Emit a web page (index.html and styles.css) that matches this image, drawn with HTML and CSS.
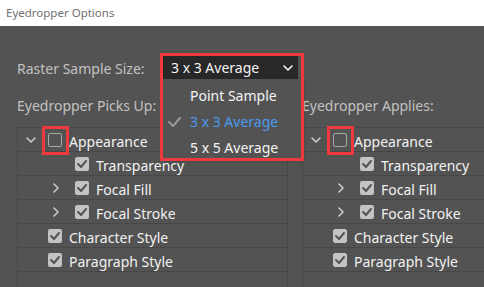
FILE: index.html
```html
<!DOCTYPE html>
<html lang="en">
  <head>
    <meta charset="UTF-8" />
    <meta name="viewport" content="width=device-width, initial-scale=1.0" />
    <title>Eyedropper Options</title>
    <link rel="stylesheet" href="styles.css">
  </head>

  <body>
    <header class="titlebar">Eyedropper Options</header>

    <main class="dialog">
      <section class="raster">
        <span class="label raster-label">Raster Sample Size:</span>
        <div class="picker">
          <div class="select">
            <span>3 x 3 Average</span>
            <svg class="select-arrow" width="10" height="6" viewBox="0 0 10 6"><path d="M1 1l4 4 4-4" /></svg>
          </div>
          <ul class="menu">
            <li class="menu-item">Point Sample</li>
            <li class="menu-item selected">
              <svg class="menu-check" width="13" height="10" viewBox="0 0 13 10"><path d="M1 5l4 4 7-8" /></svg>
              3 x 3 Average
            </li>
            <li class="menu-item">5 x 5 Average</li>
          </ul>
        </div>
      </section>

      <section class="columns">
        <article class="column">
          <h2 class="label">Eyedropper Picks Up:</h2>
          <div class="tree">
            <div class="row">
              <span class="twisty"><svg width="10" height="6" viewBox="0 0 10 6"><path d="M1 1l4 4 4-4" /></svg></span>
              <span class="box empty marked"></span>
              <span class="name">Appearance</span>
            </div>
            <div class="row sub">
              <span class="twisty"></span>
              <span class="box"><svg width="10" height="8" viewBox="0 0 10 8"><path d="M1 4l3 3 5-6" /></svg></span>
              <span class="name">Transparency</span>
            </div>
            <div class="row sub">
              <span class="twisty"><svg width="6" height="10" viewBox="0 0 6 10"><path d="M1 1l4 4-4 4" /></svg></span>
              <span class="box"><svg width="10" height="8" viewBox="0 0 10 8"><path d="M1 4l3 3 5-6" /></svg></span>
              <span class="name">Focal Fill</span>
            </div>
            <div class="row sub">
              <span class="twisty"><svg width="6" height="10" viewBox="0 0 6 10"><path d="M1 1l4 4-4 4" /></svg></span>
              <span class="box"><svg width="10" height="8" viewBox="0 0 10 8"><path d="M1 4l3 3 5-6" /></svg></span>
              <span class="name">Focal Stroke</span>
            </div>
            <div class="row">
              <span class="twisty"></span>
              <span class="box"><svg width="10" height="8" viewBox="0 0 10 8"><path d="M1 4l3 3 5-6" /></svg></span>
              <span class="name">Character Style</span>
            </div>
            <div class="row">
              <span class="twisty"></span>
              <span class="box"><svg width="10" height="8" viewBox="0 0 10 8"><path d="M1 4l3 3 5-6" /></svg></span>
              <span class="name">Paragraph Style</span>
            </div>
            <div class="row"></div>
          </div>
        </article>

        <article class="column">
          <h2 class="label">Eyedropper Applies:</h2>
          <div class="tree">
            <div class="row">
              <span class="twisty"><svg width="10" height="6" viewBox="0 0 10 6"><path d="M1 1l4 4 4-4" /></svg></span>
              <span class="box empty marked"></span>
              <span class="name">Appearance</span>
            </div>
            <div class="row sub">
              <span class="twisty"></span>
              <span class="box"><svg width="10" height="8" viewBox="0 0 10 8"><path d="M1 4l3 3 5-6" /></svg></span>
              <span class="name">Transparency</span>
            </div>
            <div class="row sub">
              <span class="twisty"><svg width="6" height="10" viewBox="0 0 6 10"><path d="M1 1l4 4-4 4" /></svg></span>
              <span class="box"><svg width="10" height="8" viewBox="0 0 10 8"><path d="M1 4l3 3 5-6" /></svg></span>
              <span class="name">Focal Fill</span>
            </div>
            <div class="row sub">
              <span class="twisty"><svg width="6" height="10" viewBox="0 0 6 10"><path d="M1 1l4 4-4 4" /></svg></span>
              <span class="box"><svg width="10" height="8" viewBox="0 0 10 8"><path d="M1 4l3 3 5-6" /></svg></span>
              <span class="name">Focal Stroke</span>
            </div>
            <div class="row">
              <span class="twisty"></span>
              <span class="box"><svg width="10" height="8" viewBox="0 0 10 8"><path d="M1 4l3 3 5-6" /></svg></span>
              <span class="name">Character Style</span>
            </div>
            <div class="row">
              <span class="twisty"></span>
              <span class="box"><svg width="10" height="8" viewBox="0 0 10 8"><path d="M1 4l3 3 5-6" /></svg></span>
              <span class="name">Paragraph Style</span>
            </div>
            <div class="row"></div>
          </div>
        </article>
      </section>
    </main>
  </body>
</html>
```

FILE: styles.css
```css
html {
  box-sizing: border-box;
  font-family: "Noto Sans", "DejaVu Sans", sans-serif;
  font-size: 14px;
}

*,
*:before,
*:after {
  box-sizing: inherit;
}

body {
  margin: 0;
  height: 100vh;
  display: flex;
  flex-direction: column;
  overflow: hidden;
  background-color: #535353;
}

svg {
  display: block;
  fill: none;
  stroke-linecap: round;
  stroke-linejoin: round;
}

.titlebar {
  height: 27px;
  line-height: 26px;
  padding-left: 6px;
  font-size: 11.5px;
  color: #707070;
  background-color: #fff;
}

.dialog {
  flex-grow: 1;
  padding-left: 17px;
}

.label {
  margin: 0;
  font-size: 14px;
  font-weight: normal;
  color: #c2c2c2;
}

/* raster sample size */
.raster {
  display: flex;
  align-items: center;
  margin-top: 30px;
  height: 23px;
}

.raster-label {
  width: 146px;
  padding-top: 1px;
}

.picker {
  position: relative;
  width: 135px;
  height: 23px;
}

.picker:after {
  content: "";
  position: absolute;
  top: -3px;
  left: -3px;
  right: -6px;
  bottom: -82px;
  border: 3px solid #ee3a3f;
  z-index: 3;
}

.select {
  display: flex;
  justify-content: space-between;
  align-items: center;
  height: 23px;
  padding: 0 5px 0 8px;
  color: #f4f4f4;
  background-color: #282828;
}

.select-arrow {
  stroke: #f4f4f4;
  stroke-width: 1.6;
}

.menu {
  position: absolute;
  top: 23px;
  left: 0;
  width: 138px;
  height: 79px;
  margin: 0;
  padding: 4px 0 0;
  list-style: none;
  background-color: #535353;
  box-shadow: 2px 2px 3px rgba(0, 0, 0, 0.45);
  z-index: 2;
}

.menu-item {
  position: relative;
  height: 26px;
  line-height: 26px;
  padding-left: 27px;
  color: #f4f4f4;
}

.menu-item.selected {
  color: #4a9bef;
}

.menu-check {
  position: absolute;
  left: 5px;
  top: 8px;
  stroke: #9a9a9a;
  stroke-width: 2;
}

/* trees */
.columns {
  display: flex;
  gap: 14px;
}

.column {
  flex: none;
  width: 271px;
}

.column .label {
  height: 20px;
  line-height: 20px;
  margin: 16px 0 12px;
  padding-top: 1px;
}

.tree {
  border: 1px solid #474747;
  border-bottom: none;
}

.row {
  display: flex;
  align-items: center;
  height: 24px;
  padding-left: 4px;
  border-top: 1px solid #474747;
  color: #f2f2f2;
}

.row:first-child {
  border-top: none;
  height: 23px;
}

.row.sub {
  padding-left: 31px;
}

.twisty {
  display: flex;
  justify-content: center;
  align-items: center;
  width: 18px;
  stroke: #d0d0d0;
  stroke-width: 1.5;
}

.sub .twisty {
  justify-content: flex-start;
  padding-left: 4px;
}

.box {
  position: relative;
  display: flex;
  justify-content: center;
  align-items: center;
  width: 14px;
  height: 14px;
  margin-left: 8px;
  border-radius: 2px;
  background-color: #c4c4c4;
  stroke: #555;
  stroke-width: 2;
}

.box.empty {
  background-color: transparent;
  border: 1px solid #a8a8a8;
}

.box.marked:after {
  content: "";
  position: absolute;
  top: -8px;
  left: -7px;
  right: -8px;
  bottom: -9px;
  border: 3px solid #ee3a3f;
}

.name {
  margin-left: 7px;
  padding-top: 3px;
  white-space: nowrap;
}
```
